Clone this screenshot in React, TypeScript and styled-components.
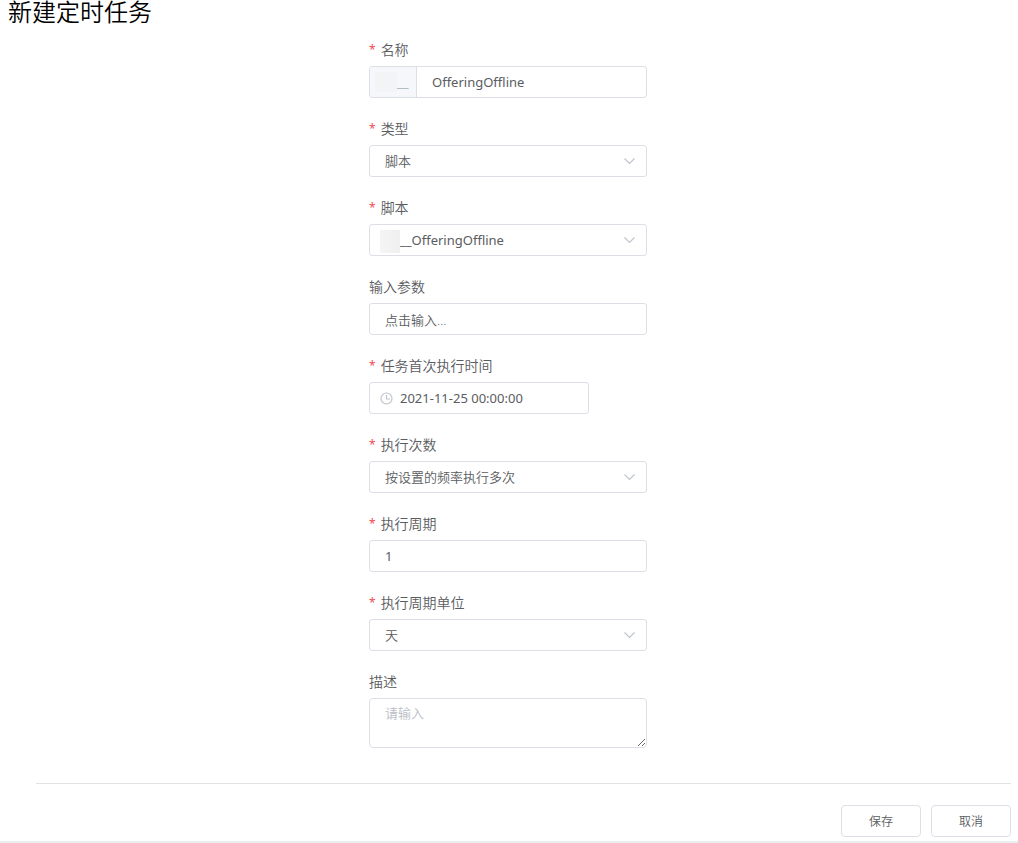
import React from "react";
import styled, { createGlobalStyle } from "styled-components";

const GlobalStyle = createGlobalStyle`
  *, *::before, *::after { box-sizing: border-box; }
  body {
    margin: 0;
    background: #fff;
    color: #5a5c60;
    font-family: "Noto Sans", "Noto Sans CJK SC", sans-serif;
    font-size: 13px;
  }
  input, select, textarea, button { font: inherit; color: inherit; }
`;

const Page = styled.main`
  border-bottom: 2px solid #e9eef3;
`;

const Title = styled.h1`
  margin: 0;
  padding: 0 8px;
  height: 34px;
  color: #000;
  font-size: 24px;
  font-weight: 350;
  line-height: 24px;
`;

const Fields = styled.div`
  width: 280px;
  max-width: 100%;
  margin: 0 auto;
  padding-right: 2px;
  display: flex;
  flex-direction: column;
  gap: 15px;
`;

const Field = styled.div`
  display: flex;
  flex-direction: column;
`;

const Label = styled.label<{ $required?: boolean }>`
  display: flex;
  align-items: center;
  gap: 5px;
  height: 32px;
  font-size: 14px;
  font-weight: 350;
  line-height: 32px;
  &::before {
    content: "*";
    display: ${(p) => (p.$required ? "block" : "none")};
    color: #f04b52;
    font-size: 12px;
    font-weight: 400;
  }
`;

const Control = styled.div<{ $narrow?: boolean }>`
  display: flex;
  align-items: center;
  position: relative;
  width: ${(p) => (p.$narrow ? "220px" : "100%")};
  height: 32px;
  border: 1px solid #dcdfe6;
  border-radius: 3px;
  background: #fff;
  overflow: hidden;
`;

const TextInput = styled.input<{ $inset?: number; $light?: boolean }>`
  flex: 1;
  min-width: 0;
  height: 30px;
  border: 0;
  outline: 0;
  padding: 0 15px 0 ${(p) => p.$inset ?? 15}px;
  background: transparent;
  font-weight: ${(p) => (p.$light ? 350 : 400)};
`;

const Select = styled.select<{ $masked?: boolean }>`
  flex: 1;
  min-width: 0;
  height: 30px;
  border: 0;
  outline: 0;
  appearance: none;
  padding: 0 30px 0 ${(p) => (p.$masked ? 30 : 15)}px;
  background: transparent;
  font-weight: ${(p) => (p.$masked ? 400 : 350)};
`;

const Prefix = styled.span`
  display: flex;
  align-items: center;
  width: 47px;
  height: 30px;
  padding-left: 5px;
  border-right: 1px solid #dcdfe6;
  background: #f5f7fa;
  color: #a8b4bc;
`;

const Mask = styled.span`
  width: 22px;
  height: 20px;
  background: #f2f4f6;
`;

const NameMask = styled.span`
  position: absolute;
  left: 10px;
  top: 5px;
  width: 20px;
  height: 23px;
  background: linear-gradient(90deg, #f5f5f5, #efefef);
`;

const Chevron = styled.svg`
  position: absolute;
  right: 10px;
  top: 8px;
  width: 13px;
  height: 13px;
  pointer-events: none;
`;

const Clock = styled.svg`
  flex: none;
  width: 13px;
  height: 13px;
  margin-left: 10px;
`;

const TextArea = styled.textarea`
  display: block;
  width: 100%;
  height: 50px;
  padding: 4px 15px;
  border: 1px solid #dcdfe6;
  border-radius: 4px;
  outline: 0;
  font-weight: 350;
  line-height: 20px;
  resize: vertical;
  &::placeholder { color: #b8bcc6; }
`;

const Footer = styled.footer`
  display: flex;
  justify-content: flex-end;
  gap: 10px;
  margin: 35px 7px 0 36px;
  padding: 21px 0 4px;
  border-top: 1px solid #e1e2e5;
`;

const Button = styled.button`
  width: 80px;
  height: 32px;
  padding: 0;
  border: 1px solid #dcdfe6;
  border-radius: 4px;
  background: #fff;
  font-size: 12px;
  font-weight: 350;
`;

function ChevronIcon() {
  return (
    <Chevron viewBox="0 0 13 13" fill="none" stroke="#c0c4cc" strokeWidth="1.2" aria-hidden="true">
      <path d="M1.5 4.5 L6.5 9.5 L11.5 4.5" />
    </Chevron>
  );
}

function SelectField(props: { id: string; label: string; value: string; masked?: boolean }) {
  return (
    <Field>
      <Label htmlFor={props.id} $required>{props.label}</Label>
      <Control>
        {props.masked && <NameMask />}
        <Select id={props.id} $masked={props.masked}>
          <option>{props.value}</option>
        </Select>
        <ChevronIcon />
      </Control>
    </Field>
  );
}

function InputField(props: { id: string; label: string; value: string; required?: boolean; light?: boolean }) {
  return (
    <Field>
      <Label htmlFor={props.id} $required={props.required}>{props.label}</Label>
      <Control>
        <TextInput id={props.id} defaultValue={props.value} $light={props.light} />
      </Control>
    </Field>
  );
}

export default function App() {
  return (
    <Page>
      <GlobalStyle />
      <Title>新建定时任务</Title>
      <form onSubmit={(e) => e.preventDefault()}>
        <Fields>
          <Field>
            <Label htmlFor="name" $required>名称</Label>
            <Control>
              <Prefix><Mask />__</Prefix>
              <TextInput id="name" defaultValue="OfferingOffline" />
            </Control>
          </Field>
          <SelectField id="type" label="类型" value="脚本" />
          <SelectField id="script" label="脚本" value="__OfferingOffline" masked />
          <InputField id="params" label="输入参数" value="点击输入..." light />
          <Field>
            <Label htmlFor="start" $required>任务首次执行时间</Label>
            <Control $narrow>
              <Clock viewBox="0 0 13 13" fill="none" stroke="#c0c4cc" strokeWidth="1.2" aria-hidden="true">
                <circle cx="6.5" cy="6.5" r="5.5" />
                <path d="M6.5 3v4H10" />
              </Clock>
              <TextInput id="start" $inset={7} defaultValue="2021-11-25 00:00:00" />
            </Control>
          </Field>
          <SelectField id="times" label="执行次数" value="按设置的频率执行多次" />
          <InputField id="period" label="执行周期" value="1" required />
          <SelectField id="unit" label="执行周期单位" value="天" />
          <Field>
            <Label htmlFor="desc">描述</Label>
            <TextArea id="desc" placeholder="请输入" />
          </Field>
        </Fields>
        <Footer>
          <Button type="submit">保存</Button>
          <Button type="button">取消</Button>
        </Footer>
      </form>
    </Page>
  );
}
